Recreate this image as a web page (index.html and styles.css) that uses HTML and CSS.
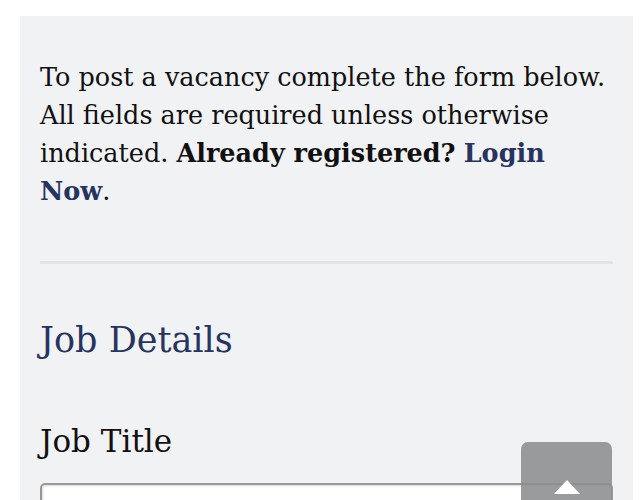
FILE: index.html
```html
<!DOCTYPE html>
<html>
<head>
<meta charset="utf-8">
<link rel="stylesheet" href="styles.css">
</head>
<body>
<div class="panel">
  <p class="intro">To post a vacancy complete the form below. All fields are required unless otherwise indicated. <strong>Already registered?</strong> <a href="#" class="login">Login Now</a>.</p>
  <hr class="sep">
  <h2 class="section">Job Details</h2>
  <label class="label">Job Title</label>
  <div class="input"></div>
</div>
<div class="totop"><svg width="26" height="14" viewBox="0 0 26 14"><path d="M13 0 L26 14 L0 14 Z" fill="#fff"/></svg></div>
</body>
</html>
```
FILE: styles.css
```css
html, body { margin: 0; padding: 0; background: #fff; overflow: hidden; }
body { padding: 16px 6px 0 20px; font-family: "DejaVu Serif", serif; color: #111; }
.panel { background: #f1f2f4; padding: 42px 20px 0 20px; height: 600px; }
.intro { margin: 0; font-size: 25.5px; line-height: 38px; }
.intro strong { font-weight: bold; }
.login { color: #26345f; font-weight: bold; text-decoration: none; }
.sep { border: 0; height: 3px; background: #e2e4e7; margin: 51px 0 0 0; }
.section { margin: 54px 0 0 0; font-weight: normal; color: #26345f; font-size: 35px; line-height: 44px; }
.label { display: block; margin-top: 59px; font-size: 31px; line-height: 40px; }
.input { margin-top: 22px; height: 40px; background: #fff; border: 2px solid #999; border-radius: 5px; box-shadow: inset 1px 1px 2px rgba(0,0,0,0.15); }
.totop { position: absolute; left: 521px; top: 442px; width: 91px; height: 80px; background: rgba(140,141,143,0.88); border-radius: 7px; display: flex; justify-content: center; padding-top: 38px; box-sizing: border-box; }
.totop svg { display: block; }
```
